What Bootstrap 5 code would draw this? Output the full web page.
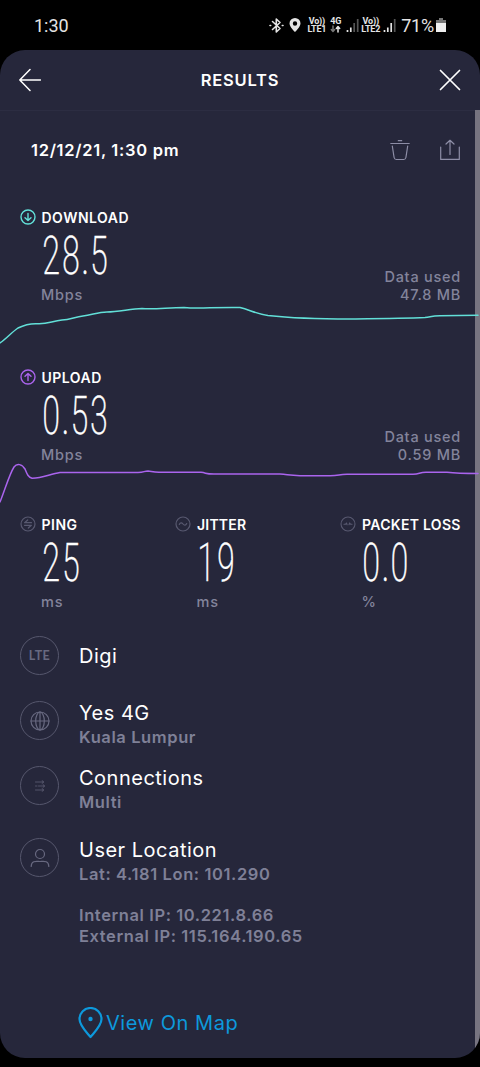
<!DOCTYPE html>
<html lang="en">
<head>
<meta charset="utf-8">
<meta name="viewport" content="width=device-width, initial-scale=1">
<title>Results</title>
<link rel="stylesheet" href="https://cdn.jsdelivr.net/npm/bootstrap@5.3.0/dist/css/bootstrap.min.css">
<style>
body{background:#000;color:#fff;font-family:Inter,"Liberation Sans",sans-serif;height:1067px;overflow:hidden}
svg{display:block;flex:none;fill:none;stroke:currentColor;stroke-linecap:round;stroke-linejoin:round}
svg.solid{stroke:none}
svg.butt{stroke-linecap:butt}
.status-bar{height:50px;padding:0 34px 0 34px;color:#e4e4e4;font-family:Roboto,sans-serif}
.clock{font-size:18px}
.volte{font:700 9px/8px Roboto,sans-serif;text-align:center;letter-spacing:-.2px}
.panel{height:1008px;background:#26273b;border-radius:25px;overflow:hidden}
.topbar{height:61px;padding:0 19px;border-bottom:1px solid #2c2d42}
.topbar h1{font-size:16.5px;font-weight:600;letter-spacing:.8px;padding-top:2px}
.daterow{height:80px;padding:0 19px 0 31px;color:#8d8da6}
.stamp{font-size:16.5px;font-weight:600;letter-spacing:.7px;color:#fff;margin-top:-2px}
.daterow svg{margin-top:-2px}
.test{height:160px;padding:0 20px}
.test-2{height:147px}
.metrics{padding:0 0 0 20px}
.metrics>div{flex:none}
.tag{height:20px;gap:6px;font-size:14px;font-weight:600;letter-spacing:.5px}
.tag svg{width:16px;height:16px;margin-left:-.5px}
.num{height:58px;margin-left:21.500px;font:200 54px/57px Roboto,sans-serif;font-stretch:75%;white-space:nowrap}
.num span{display:inline-block;transform:scaleX(.7);transform-origin:0 50%;letter-spacing:1.900px;-webkit-text-stroke:.35px #fff}
.num i{font-style:normal;letter-spacing:.5px;margin-left:-.500px}
.unit{height:18px;margin-left:21px;font-size:14.500px;line-height:20px;font-weight:500;letter-spacing:.8px;color:#83849b}
.used{right:19px;top:61px;font-size:14.500px;line-height:18px;font-weight:500;letter-spacing:.75px;color:#83849b;text-align:right}
.plot{z-index:2}
.down{color:#62e0d8}
.up{color:#aa64ed}
.dim{color:#585970}
.ring{width:39px;height:39px;border:1.500px solid #56576d;border-radius:50%;color:#686980;flex:none}
.lte{font:700 12.500px Lato,sans-serif;letter-spacing:.4px}
.info{padding:0 20px;gap:20px}
.info h2{font-size:20px;line-height:25px;font-weight:400;letter-spacing:.5px;margin:0}
.info p{font-size:16.500px;line-height:21px;font-weight:600;letter-spacing:.6px;color:#7f8097;margin:1px 0 0}
.map{margin:60px 0 0 78px;color:#0d99dc;font-size:20px;letter-spacing:.55px;gap:3px}
.scroller{right:0;top:60px;width:5px;height:939px;background:#777480}
</style>
</head>
<body>
<div class="status-bar d-flex align-items-center justify-content-between">
  <span class="clock">1:30</span>
  <div class="d-flex align-items-center">
    <svg width="15" height="17" viewBox="0 0 15 17" stroke-width="1.6"><path d="M3.500 4.500 11 11.500 7.300 15V2L11 5.500 3.500 12.500M1 8.500h.7M13.300 8.500h.7"/></svg>
    <svg class="solid" style="margin-left:5px" width="12" height="14" viewBox="0 0 12 14"><path fill="currentColor" fill-rule="evenodd" d="M6 0A5.500 5.500 0 0 0 .5 5.500C.5 9 6 14 6 14s5.500-5 5.500-8.500A5.500 5.500 0 0 0 6 0zm0 3.300a2.200 2.200 0 1 1 0 4.400 2.200 2.200 0 0 1 0-4.400z"/></svg>
    <div class="volte" style="margin-left:6px">Vo))<br>LTE1</div>
    <div class="volte" style="margin-left:4px">4G<svg width="11" height="8" viewBox="0 0 11 8" stroke-width="1.500"><path stroke="#777" d="M3 1v5M1.300 4.500 3 6.500l1.700-2"/><path d="M8 7V2M6.300 3.500 8 1.500l1.700 2"/></svg></div>
    <svg class="butt" style="margin-left:5px" width="13" height="14" viewBox="0 0 13 14" stroke-width="1.700"><path d="M1.500 14v-2M4.800 14V9.500"/><path stroke="#555" d="M8.200 14V5M11.700 14V1"/></svg>
    <div class="volte" style="margin-left:2px">Vo))<br>LTE2</div>
    <svg class="butt" style="margin-left:3px" width="13" height="14" viewBox="0 0 13 14" stroke-width="1.700"><path d="M1.500 14v-2M4.800 14V9.500M8.200 14V5"/><path stroke="#555" d="M11.700 14V1"/></svg>
    <span style="margin-left:5px;font-size:18px;letter-spacing:-.2px">71%</span>
    <svg class="solid" style="margin-left:2px" width="10" height="14" viewBox="0 0 10 14"><path fill="#777" d="M3 0h4v2h3v4H0V2h3z"/><path fill="#eee" d="M0 5h10v9H0z"/></svg>
  </div>
</div>

<main class="panel position-relative">
  <header class="topbar d-flex align-items-center justify-content-between">
    <svg width="22" height="24" viewBox="0 0 22 24" stroke-width="1.500"><path d="M21.500 12H.8M11 1.500.8 12 11 22.500"/></svg>
    <h1 class="m-0">RESULTS</h1>
    <svg width="22" height="22" viewBox="0 0 22 22" stroke-width="1.700"><path d="M1.500 1.500l19 19M20.500 1.500l-19 19"/></svg>
  </header>

  <div class="daterow d-flex align-items-center">
    <span class="stamp me-auto">12/12/21, 1:30 pm</span>
    <svg width="20" height="22" viewBox="0 0 20 22" stroke-width="1.200"><path d="M.8 4.500h18.400M8.300 1.700h3.400M2.300 7l1.800 11.500q.4 2 2.200 2h7.400q1.800 0 2.200-2L17.700 7"/></svg>
    <svg style="margin-left:29px" width="22" height="22" viewBox="0 0 22 22" stroke-width="1.200"><path d="M1.700 8v12.400h18.600V8M11 15.500V1.500M7 5l4-3.700L15 5"/></svg>
  </div>

  <section class="test position-relative mt-3">
    <div class="tag d-flex align-items-center"><svg class="down" viewBox="0 0 16 16" stroke-width="1.400"><circle cx="8" cy="8" r="7"/><path d="M8 4.500v7M5 8.700l3 2.900 3-2.900"/></svg>DOWNLOAD</div>
    <div class="num"><span>28<i>.</i>5</span></div>
    <div class="unit">Mbps</div>
    <div class="used position-absolute">Data used<br>47.8 MB</div>
    <svg class="plot down position-absolute top-0 start-0" width="480" height="160" viewBox="0 207 480 160" stroke-width="1.500"><path d="M0 343C6 339 12 332 18 328C26 324 31 323.500 37 323.700C47 324.500 52 321 62 320C70 319.500 75 317 83 316C92 315 98 312 107 312C118 312 130 309 142 308.500C155 309.500 168 307.500 184 307.500C200 309 212 307 240 307.500C250 310 257 314 268 315.500C295 318.500 325 319 350 319C380 318.700 405 318.500 425 317.600C431 317 431 315.700 440 315.700L478 315.200"/></svg>
  </section>

  <section class="test test-2 position-relative">
    <div class="tag d-flex align-items-center"><svg class="up" viewBox="0 0 16 16" stroke-width="1.400"><circle cx="8" cy="8" r="7"/><path d="M8 11.500v-7M5 7.300l3-2.900 3 2.900"/></svg>UPLOAD</div>
    <div class="num"><span>0<i>.</i>53</span></div>
    <div class="unit">Mbps</div>
    <div class="used position-absolute">Data used<br>0.59 MB</div>
    <svg class="plot up position-absolute top-0 start-0" width="480" height="147" viewBox="0 367 480 147" stroke-width="1.500"><path d="M0 502C5 490 9 475 14 467C17 463 22 464 25 469C27 474 28 477 32 478.300C42 478.500 50 474 60 472.500H138C144 472.500 144 471 148 471C152 471.500 153 472.300 159 472.300H201C207 473 205 474 214 474H280C290 475 290 475.500 300 475.700H330C340 475.500 338 474.300 347 474.200H413C420 474 419 472.300 426 472.300H447C455 473.200 458 473.500 478 473.500"/></svg>
  </section>

  <section class="metrics d-flex">
    <div style="width:155.500px">
      <div class="tag d-flex align-items-center"><svg class="dim" viewBox="0 0 16 16" stroke-width="1.200"><circle cx="8" cy="8" r="7"/><path d="M11.500 6.700H4.600L7.700 4M4.500 9.300h6.900L8.300 12"/></svg>PING</div>
      <div class="num"><span>25</span></div><div class="unit">ms</div>
    </div>
    <div style="width:165px">
      <div class="tag d-flex align-items-center" style="letter-spacing:.2px"><svg class="dim" viewBox="0 0 16 16" stroke-width="1.200"><circle cx="8" cy="8" r="7"/><path d="M4.300 8.500C5.300 6.300 6.800 6.500 8 8s2.700 1.700 3.700-.5"/></svg>JITTER</div>
      <div class="num"><span>19</span></div><div class="unit">ms</div>
    </div>
    <div>
      <div class="tag d-flex align-items-center text-nowrap" style="letter-spacing:.3px"><svg class="dim" viewBox="0 0 16 16" stroke-width="1.100"><circle cx="8" cy="8" r="7"/><path d="M4 8.300h1.500l1-1.300.6 1.800M9 8.800l.7-1.900.8 1.400H12"/></svg>PACKET LOSS</div>
      <div class="num"><span>0<i>.</i>0</span></div><div class="unit">%</div>
    </div>
  </section>

  <section>
    <div class="info d-flex align-items-center" style="height:40px;margin-top:26px"><div class="ring lte d-flex align-items-center justify-content-center" style="margin-top:-1px">LTE</div><h2>Digi</h2></div>
    <div class="info d-flex" style="height:65px;margin-top:25px"><div class="ring d-flex align-items-center justify-content-center"><svg width="20" height="20" viewBox="0 0 20 20" stroke-width="1.200"><circle cx="10" cy="10" r="9"/><ellipse cx="10" cy="10" rx="4.300" ry="9"/><path d="M1 10h18M10 1v18"/></svg></div><div><h2>Yes 4G</h2><p>Kuala Lumpur</p></div></div>
    <div class="info d-flex" style="height:72px"><div class="ring d-flex align-items-center justify-content-center"><svg width="10" height="12" viewBox="0 0 10 12" stroke-width=".7"><path d="M.5 2h8M.5 6H2M3.500 6h6M.5 10h8M7 .5 8.700 2 7 3.500M8 4.500 9.600 6 8 7.500M7 8.500 8.700 10 7 11.500"/></svg></div><div><h2>Connections</h2><p>Multi</p></div></div>
    <div class="info d-flex" style="height:109px"><div class="ring d-flex align-items-center justify-content-center"><svg width="20" height="20" viewBox="0 0 20 20" stroke-width="1.200"><circle cx="10" cy="6" r="4.500"/><path d="M1.200 18.500C1.200 12 7 13.500 10 13.500s8.800-1.500 8.800 5"/></svg></div><div><h2>User Location</h2><p>Lat: 4.181 Lon: 101.290</p><p style="margin-top:20px">Internal IP: 10.221.8.66<br>External IP: 115.164.190.65</p></div></div>
    <div class="map d-flex align-items-center"><svg width="25" height="32" viewBox="0 0 25 32" stroke-width="2.200"><path d="M12.500 30C8 24.500 1.500 18.500 1.500 12a11 11 0 0 1 22 0C23.500 18.500 17 24.500 12.500 30z"/><circle cx="12.500" cy="12" r="2.200" fill="currentColor" stroke="none"/></svg>View On Map</div>
  </section>
  <div class="scroller position-absolute"></div>
</main>
<script src="https://cdn.jsdelivr.net/npm/bootstrap@5.3.0/dist/js/bootstrap.bundle.min.js"></script>
</body>
</html>
